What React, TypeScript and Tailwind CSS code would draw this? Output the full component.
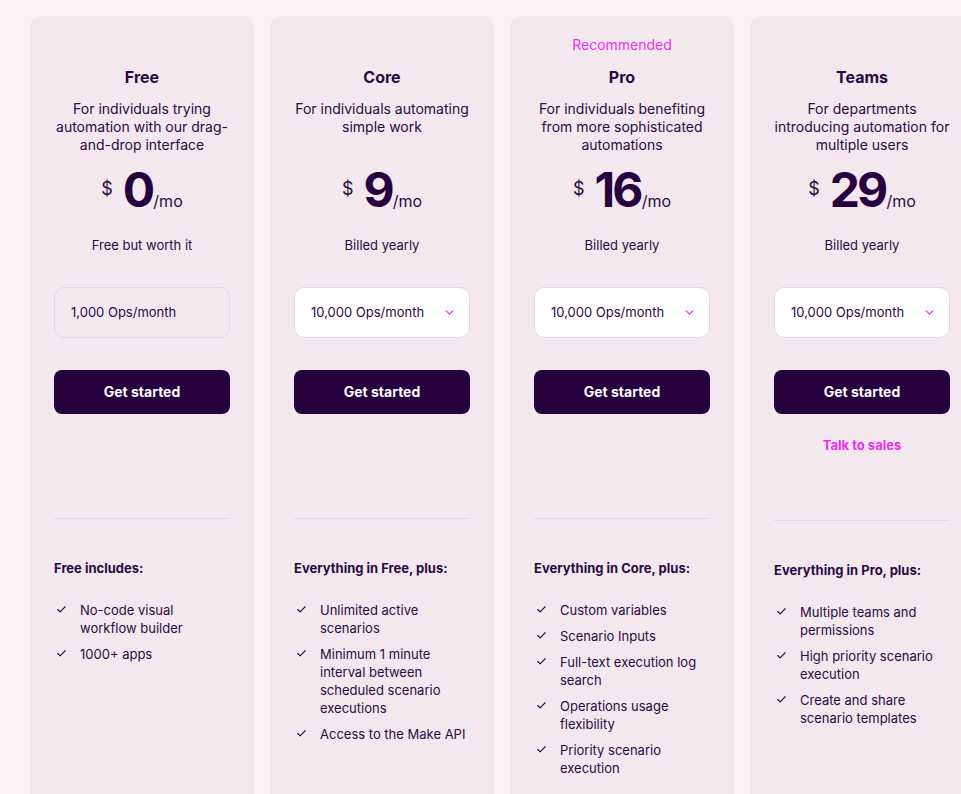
import { ChevronDown } from 'lucide-react'

interface Plan {
  name: string
  desc: string
  price: string
  note: string
  ops: string
  selectable: boolean
  recommended?: boolean
  sales?: boolean
  heading: string
  features: string[]
}

const plans: Plan[] = [
  {
    name: 'Free',
    desc: 'For individuals trying automation with our drag-and-drop interface',
    price: '0',
    note: 'Free but worth it',
    ops: '1,000 Ops/month',
    selectable: false,
    heading: 'Free includes:',
    features: ['No-code visual workflow builder', '1000+ apps'],
  },
  {
    name: 'Core',
    desc: 'For individuals automating simple work',
    price: '9',
    note: 'Billed yearly',
    ops: '10,000 Ops/month',
    selectable: true,
    heading: 'Everything in Free, plus:',
    features: [
      'Unlimited active scenarios',
      'Minimum 1 minute interval between scheduled scenario executions',
      'Access to the Make API',
    ],
  },
  {
    name: 'Pro',
    desc: 'For individuals benefiting from more sophisticated automations',
    price: '16',
    note: 'Billed yearly',
    ops: '10,000 Ops/month',
    selectable: true,
    recommended: true,
    heading: 'Everything in Core, plus:',
    features: [
      'Custom variables',
      'Scenario Inputs',
      'Full-text execution log search',
      'Operations usage flexibility',
      'Priority scenario execution',
    ],
  },
  {
    name: 'Teams',
    desc: 'For departments introducing automation for multiple users',
    price: '29',
    note: 'Billed yearly',
    ops: '10,000 Ops/month',
    selectable: true,
    sales: true,
    heading: 'Everything in Pro, plus:',
    features: [
      'Multiple teams and permissions',
      'High priority scenario execution',
      'Create and share scenario templates',
    ],
  },
]

const CheckMark = () => (
  <svg width="11" height="11" viewBox="0 0 24 24" fill="none" stroke="currentColor" strokeWidth="2.4" strokeLinecap="round" strokeLinejoin="round" className="shrink-0 mt-[3px] ml-[2px]">
    <path d="M20 6 9 17l-5-5" />
  </svg>
)

function PlanCard({ plan }: { plan: Plan }) {
  return (
    <div className="w-[224px] shrink-0 h-[820px] rounded-xl bg-[#f4e8ef] px-6 pt-5 text-[#2a0a45]">
      <div className="h-[18px] text-center text-sm leading-[18px] text-[#ee2ff0]">
        {plan.recommended ? 'Recommended' : ''}
      </div>
      <div className="mt-[11px] text-center text-base font-bold leading-6">{plan.name}</div>
      <p className="mt-[11px] h-[54px] text-center text-sm leading-[18px]">{plan.desc}</p>
      <div className="mt-3 flex items-baseline justify-center">
        <span className="self-start mt-[13px] mr-[10px] text-lg leading-5">$</span>
        <span className="text-5xl font-bold leading-[48px] tracking-[-0.06em] text-[#26003f]">{plan.price}</span>
        <span className="ml-[1px] text-base leading-5">/mo</span>
      </div>
      <div className="mt-[21px] text-center text-[13px] leading-5">{plan.note}</div>
      {plan.selectable ? (
        <div className="mt-[32px] flex h-[51px] items-center justify-between rounded-[10px] border border-[#e4d6e3] bg-white pl-4 pr-[13px] text-[13px]">
          <span>{plan.ops}</span>
          <ChevronDown size={13} strokeWidth={2.5} className="text-[#ee2ff0]" />
        </div>
      ) : (
        <div className="mt-[32px] flex h-[51px] items-center rounded-[10px] border border-[#e4d6e3] pl-4 text-[13px]">
          {plan.ops}
        </div>
      )}
      <button className="mt-[32px] h-[44px] w-full rounded-lg bg-[#26003f] text-sm font-bold text-white">
        Get started
      </button>
      <div className={plan.sales ? 'h-[106px] pt-[21px]' : 'h-[104px]'}>
        {plan.sales && (
          <div className="text-center text-[13px] font-bold leading-5 text-[#ee2ff0]">Talk to sales</div>
        )}
      </div>
      <div className="h-px bg-[#e6d6e4]" />
      <div className="mt-[39px] text-[13px] font-bold leading-5">{plan.heading}</div>
      <ul className="mt-[23px] flex flex-col gap-2">
        {plan.features.map((f) => (
          <li key={f} className="flex gap-[13px] text-[13px] leading-[18px]">
            <CheckMark />
            <span>{f}</span>
          </li>
        ))}
      </ul>
    </div>
  )
}

export default function App() {
  return (
    <div className="h-screen w-full overflow-hidden bg-[#fcf1f7] font-['Inter',sans-serif]">
      <div className="flex gap-4 pl-[30px] pt-4">
        {plans.map((p) => (
          <PlanCard key={p.name} plan={p} />
        ))}
      </div>
    </div>
  )
}
